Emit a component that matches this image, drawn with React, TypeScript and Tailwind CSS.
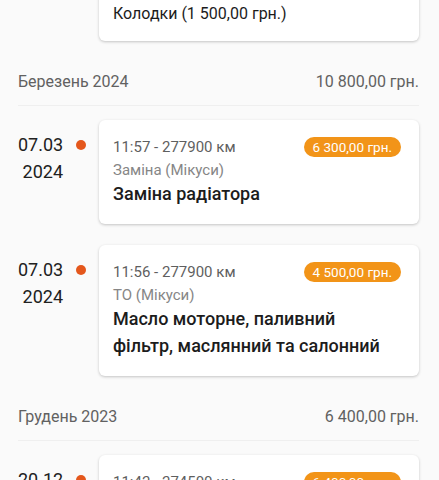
const FONT = { fontFamily: 'Roboto, "Noto Sans", sans-serif' };

interface Entry {
  date: string;
  year: string;
  time: string;
  km: string;
  amount: string;
  kind: string;
  title: string;
}

interface Month {
  label: string;
  total: string;
  entries: Entry[];
}

const MONTHS: Month[] = [
  {
    label: 'Березень 2024',
    total: '10 800,00 грн.',
    entries: [
      {
        date: '07.03',
        year: '2024',
        time: '11:57',
        km: '277900',
        amount: '6 300,00 грн.',
        kind: 'Заміна (Мікуси)',
        title: 'Заміна радіатора',
      },
      {
        date: '07.03',
        year: '2024',
        time: '11:56',
        km: '277900',
        amount: '4 500,00 грн.',
        kind: 'ТО (Мікуси)',
        title: 'Масло моторне, паливний фільтр, маслянний та салонний',
      },
    ],
  },
  {
    label: 'Грудень 2023',
    total: '6 400,00 грн.',
    entries: [
      {
        date: '20.12',
        year: '2023',
        time: '11:42',
        km: '274500',
        amount: '6 400,00 грн.',
        kind: 'Заміна (Мікуси)',
        title: 'Заміна зчеплення',
      },
    ],
  },
];

function EntryRow({ entry }: { entry: Entry }) {
  return (
    <div className="flex pb-[21px]">
      {/* date column */}
      <div className="w-[45px] shrink-0 pt-[11px] text-right text-[18px] leading-[27px] text-[#212121]">
        <div>{entry.date}</div>
        <div>{entry.year}</div>
      </div>
      <div className="w-[36px] flex justify-center pt-[20px] shrink-0">
        <div className="h-[10px] w-[10px] rounded-full bg-[#e4571c]" />
      </div>
      <div className="flex-1 rounded-[6px] bg-white pl-[14px] pr-[18px] pt-4 pb-[17px] shadow-[0_1px_3px_rgba(0,0,0,0.22)]">
        <div className="flex h-[22px] items-center justify-between">
          <span className="text-[15px] text-[#5f5f5f]">
            {entry.time} - {entry.km} км
          </span>
          <span className="rounded-full bg-[#f29418] px-[9px] text-[13.5px] leading-[20px] text-white">
            {entry.amount}
          </span>
        </div>
        <div className="mt-[2px] text-[15px] leading-5 text-[#868686]">{entry.kind}</div>
        <div className="pr-[10px] text-[18px] font-medium leading-[27px] text-[#1c1c1c]">
          {entry.title}
        </div>
      </div>
    </div>
  );
}

export default function App() {
  return (
    <div
      className="h-[480px] w-[439px] overflow-hidden bg-[#fafafa] pl-[18px] pr-[20px]"
      style={FONT}
    >
      {/* tail of the previous card */}
      <div className="flex pb-[21px]">
        <div className="w-[81px] shrink-0" />
        <div className="-mt-[20px] flex-1 rounded-[6px] bg-white pl-[14px] pt-[22px] pb-[15px] shadow-[0_1px_3px_rgba(0,0,0,0.22)]">
          <div className="text-[16px] leading-6 text-[#1c1c1c]">Колодки (1 500,00 грн.)</div>
        </div>
      </div>

      {MONTHS.map((month) => (
        <div key={month.label}>
          <div className="flex items-center justify-between pt-[9px] pb-[12px] text-[16px] leading-[22px] text-[#616161]">
            <span>{month.label}</span>
            <span>{month.total}</span>
          </div>
          <div className="mb-[14px] h-px bg-[#efefef]" />
          {month.entries.map((entry, i) => (
            <EntryRow key={i} entry={entry} />
          ))}
        </div>
      ))}
    </div>
  );
}
